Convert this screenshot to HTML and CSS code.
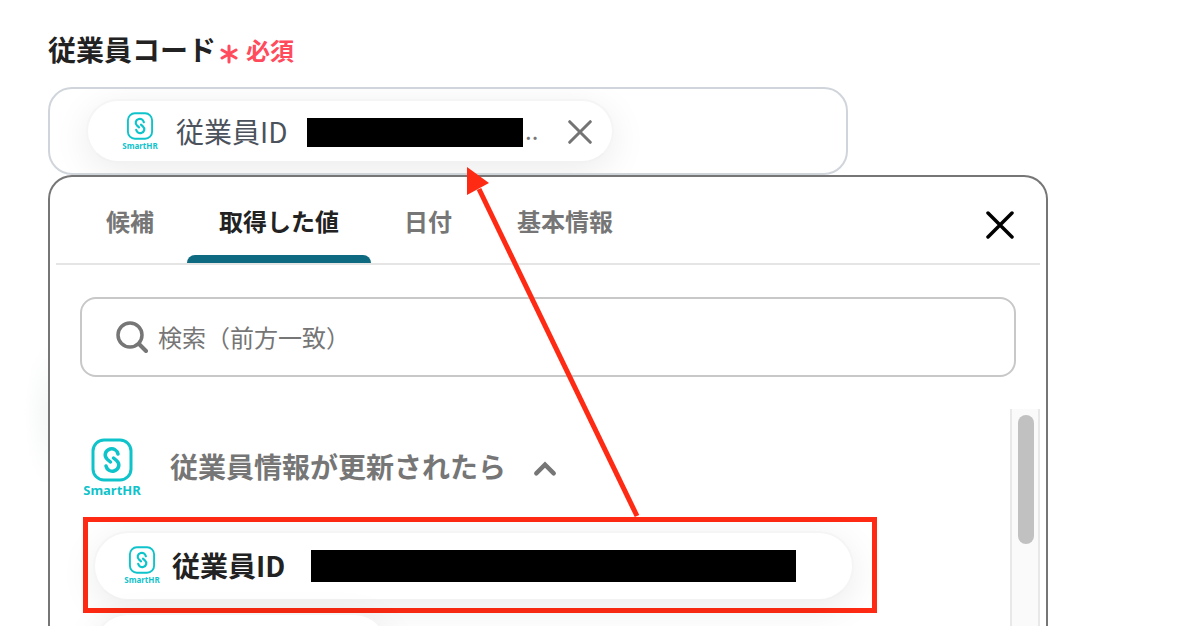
FILE: index.html
```html
<!DOCTYPE html>
<html lang="ja">
<head>
    <meta charset="UTF-8">
    <title>従業員コード</title>
    <link rel="stylesheet" href="styles.css">
</head>
<body>
    <svg class="defs" aria-hidden="true">
        <symbol id="smarthr" viewBox="0 0 42 44">
            <rect x="2" y="2" width="38" height="40" rx="11" fill="none" stroke="currentColor" stroke-width="3"/>
            <path d="M27 16C26 12 22.500 10 19 11C14 12.500 12.500 18 16.500 21.500L19.500 24M15 28C16 32 19.500 34 23 33C28 31.500 29.500 26 25.500 22.500L22.500 20" fill="none" stroke="currentColor" stroke-width="3.5" stroke-linecap="round"/>
        </symbol>
        <symbol id="cross" viewBox="0 0 28 28">
            <path d="M2 2L26 26M26 2L2 26" fill="none" stroke="currentColor" stroke-width="3.5" stroke-linecap="round"/>
        </symbol>
    </svg>

    <main class="page">
        <div class="title">
            <h1 id="code-label">従業員コード</h1>
            <svg class="asterisk" viewBox="0 0 18 20" aria-hidden="true">
                <path d="M9 2V18M2 6L16 14M16 6L2 14" stroke="currentColor" stroke-width="3" stroke-linecap="round"/>
            </svg>
            <span class="required">必須</span>
        </div>

        <div class="field" role="group" aria-labelledby="code-label">
            <div class="pill field-pill">
                <span class="logo">
                    <svg><use href="#smarthr"/></svg>
                    <span>SmartHR</span>
                </span>
                <span class="pill-name">従業員ID</span>
                <span class="mask"></span>
                <span class="dots">..</span>
                <button class="remove" type="button" aria-label="削除"><svg><use href="#cross"/></svg></button>
            </div>
        </div>

        <section class="panel">
            <div class="panel-head">
                <div class="tabs" role="tablist">
                    <button type="button" role="tab">候補</button>
                    <button type="button" role="tab" class="select" aria-selected="true">取得した値</button>
                    <button type="button" role="tab">日付</button>
                    <button type="button" role="tab">基本情報</button>
                </div>
                <button class="close" type="button" aria-label="閉じる"><svg><use href="#cross"/></svg></button>
            </div>

            <label class="search">
                <svg viewBox="0 0 32 32" aria-hidden="true">
                    <circle cx="14" cy="14" r="12" fill="none" stroke="currentColor" stroke-width="3.5"/>
                    <path d="M23 23L30 30" stroke="currentColor" stroke-width="4" stroke-linecap="round"/>
                </svg>
                <input type="text" aria-label="検索" placeholder="検索（前方一致）">
            </label>

            <div class="results">
                <div class="list">
                    <button class="group" type="button" aria-expanded="true">
                        <span class="logo logo-big">
                            <svg><use href="#smarthr"/></svg>
                            <span>SmartHR</span>
                        </span>
                        <span>従業員情報が更新されたら</span>
                        <svg class="chevron" viewBox="0 0 22 14" aria-hidden="true">
                            <path d="M3 11L11 3L19 11" fill="none" stroke="currentColor" stroke-width="4" stroke-linecap="round"/>
                        </svg>
                    </button>
                    <div class="highlight">
                        <button class="pill item" type="button">
                            <span class="logo">
                                <svg><use href="#smarthr"/></svg>
                                <span>SmartHR</span>
                            </span>
                            <span class="pill-name">従業員ID</span>
                            <span class="mask"></span>
                        </button>
                    </div>
                    <div class="pill next-item"></div>
                </div>
                <div class="scrollbar"><div class="thumb"></div></div>
            </div>
        </section>

        <!-- arrow from the list item to the field -->
        <svg class="arrow" viewBox="0 0 176 352" aria-hidden="true">
            <path d="M13 22L171 349" stroke="#ff2a13" stroke-width="5"/>
            <path d="M1 0L23 16L1 28Z" fill="#ff2a13"/>
        </svg>
    </main>
</body>
</html>
```

FILE: styles.css
```css
*{
    box-sizing: border-box;
    margin: 0;
    padding: 0;
}
body{
    height: 100vh;
    overflow: hidden;
    background: #fff;
    color: #222;
    font-family: "Noto Sans CJK JP", sans-serif;
    font-size: 24px;
}
button{
    border: 0;
    background: none;
    color: inherit;
    font: inherit;
    cursor: pointer;
}
svg{
    display: block;
    flex: none;
}
.defs{
    position: absolute;
    width: 0;
    height: 0;
}
.page{
    position: relative;
    display: flex;
    flex-direction: column;
    height: 100vh;
    padding: 29px 48px 0;
    background: radial-gradient(ellipse 24px 72px at 48px 415px, #f5f8f7, #fff);
}

/* title */
.title{
    display: flex;
    align-items: center;
    height: 40px;
    margin-bottom: 18px;
}
.title h1{
    font-size: 28px;
    font-weight: 700;
}
.asterisk{
    width: 18px;
    height: 20px;
    margin: 10px 8px 0 4px;
    color: #ff4b5c;
}
.required{
    color: #ff4b5c;
    font-weight: 700;
}

/* field */
.field{
    display: flex;
    flex: none;
    align-items: center;
    max-width: 800px;
    height: 88px;
    padding-left: 36px;
    border: 2px solid #d0d5dc;
    border-radius: 24px;
    overflow: hidden;
}
.pill{
    display: flex;
    align-items: center;
    border: 2px solid #f5f5f5;
    border-bottom-color: #f2f2f2;
    border-radius: 36px;
    background: #fff;
    box-shadow: 0 8px 36px rgba(0, 0, 0, .08);
}
.field-pill{
    width: 528px;
    height: 64px;
    padding: 2px 16px 0 33px;
    color: #4b525c;
}
.pill-name{
    padding-bottom: 2px;
    font-size: 28px;
    line-height: 40px;
    white-space: nowrap;
}
.logo{
    display: flex;
    flex: none;
    flex-direction: column;
    align-items: center;
    width: 38px;
    color: #0fc3cb;
    font-family: "Noto Sans", sans-serif;
    font-size: 8px;
    font-weight: 700;
    line-height: 12px;
}
.logo svg{
    width: 28px;
    height: 28px;
}
.field-pill .pill-name{
    margin-left: 17px;
}
.mask{
    height: 29px;
    background: #000;
}
.field-pill .mask{
    flex: 1;
    margin-left: 20px;
}
.dots{
    width: 28px;
    padding: 0 0 6px 2px;
    color: #777;
}
.remove{
    margin-left: 13px;
    padding: 4px;
    color: #747474;
}
.remove svg{
    width: 24px;
    height: 24px;
}

/* panel */
.panel{
    display: flex;
    flex: 1;
    flex-direction: column;
    min-height: 0;
    max-width: 1000px;
    padding: 0 6px;
    border: 2px solid #767676;
    border-bottom: 0;
    border-radius: 24px 24px 0 0;
    background: #fff;
}
.panel-head{
    display: flex;
    flex: none;
    align-items: center;
    justify-content: space-between;
    height: 88px;
    padding: 0 26px 0 18px;
    border-bottom: 2px solid #e5e5e5;
}
.tabs{
    display: flex;
    align-self: stretch;
    gap: 1px;
}
.tabs button{
    padding: 8px 32px 0;
    border-bottom: 8px solid transparent;
    color: #767676;
    font-weight: 700;
    white-space: nowrap;
}
.tabs .select{
    position: relative;
    color: #222;
}
.tabs .select::after{
    content: "";
    position: absolute;
    right: 0;
    bottom: -8px;
    left: 0;
    height: 8px;
    border-radius: 8px 8px 0 0;
    background: #0d6a80;
}
.close{
    padding-top: 9px;
    color: #000;
}
.close svg{
    width: 28px;
    height: 28px;
}
.search{
    display: flex;
    flex: none;
    align-items: center;
    gap: 10px;
    height: 80px;
    margin: 32px 24px;
    padding: 0 34px;
    border: 2px solid #c8c8c8;
    border-radius: 16px;
    color: #767676;
}
.search svg{
    width: 32px;
    height: 32px;
}
.search input{
    flex: 1;
    min-width: 0;
    padding-bottom: 2px;
    border: 0;
    outline: 0;
    background: none;
    color: #222;
    font: inherit;
}
.search input::placeholder{
    color: #767676;
    opacity: 1;
}

/* results */
.results{
    display: flex;
    flex: 1;
    min-height: 0;
}
.list{
    flex: 1;
    min-width: 0;
    padding: 28px 24px 0 27px;
    overflow: hidden;
}
.group{
    display: flex;
    align-items: center;
    height: 60px;
    margin-bottom: 20px;
    color: #767676;
    font-size: 28px;
    font-weight: 700;
    line-height: 40px;
    white-space: nowrap;
}
.group > span{
    padding-bottom: 2px;
}
.group .logo-big{
    width: 58px;
    margin-right: 29px;
    padding: 2px 0 0;
    font-size: 13px;
    line-height: 16px;
}
.logo-big svg{
    width: 42px;
    height: 44px;
}
.chevron{
    width: 24px;
    height: 16px;
    margin: 3px 0 0 27px;
}
.highlight{
    max-width: 794px;
    padding: 9px 18px 7px 5px;
    border: 5px solid #ff2a13;
}
.item{
    width: 100%;
    height: 70px;
    padding: 0 56px 0 28px;
    font-weight: 700;
}
.item .pill-name{
    margin-left: 11px;
}
.item .mask{
    flex: 1;
    height: 32px;
    margin-left: 26px;
}
.next-item{
    width: 296px;
    height: 70px;
    margin-left: 10px;
}
.scrollbar{
    width: 30px;
    padding: 6px;
    border: 2px solid #e8e8e8;
    border-width: 0 2px;
    background: #fafafa;
}
.thumb{
    width: 16px;
    height: 129px;
    border-radius: 8px;
    background: #c1c1c1;
}

/* arrow */
.arrow{
    position: absolute;
    top: 167px;
    left: 466px;
    width: 176px;
    height: 352px;
}
```
